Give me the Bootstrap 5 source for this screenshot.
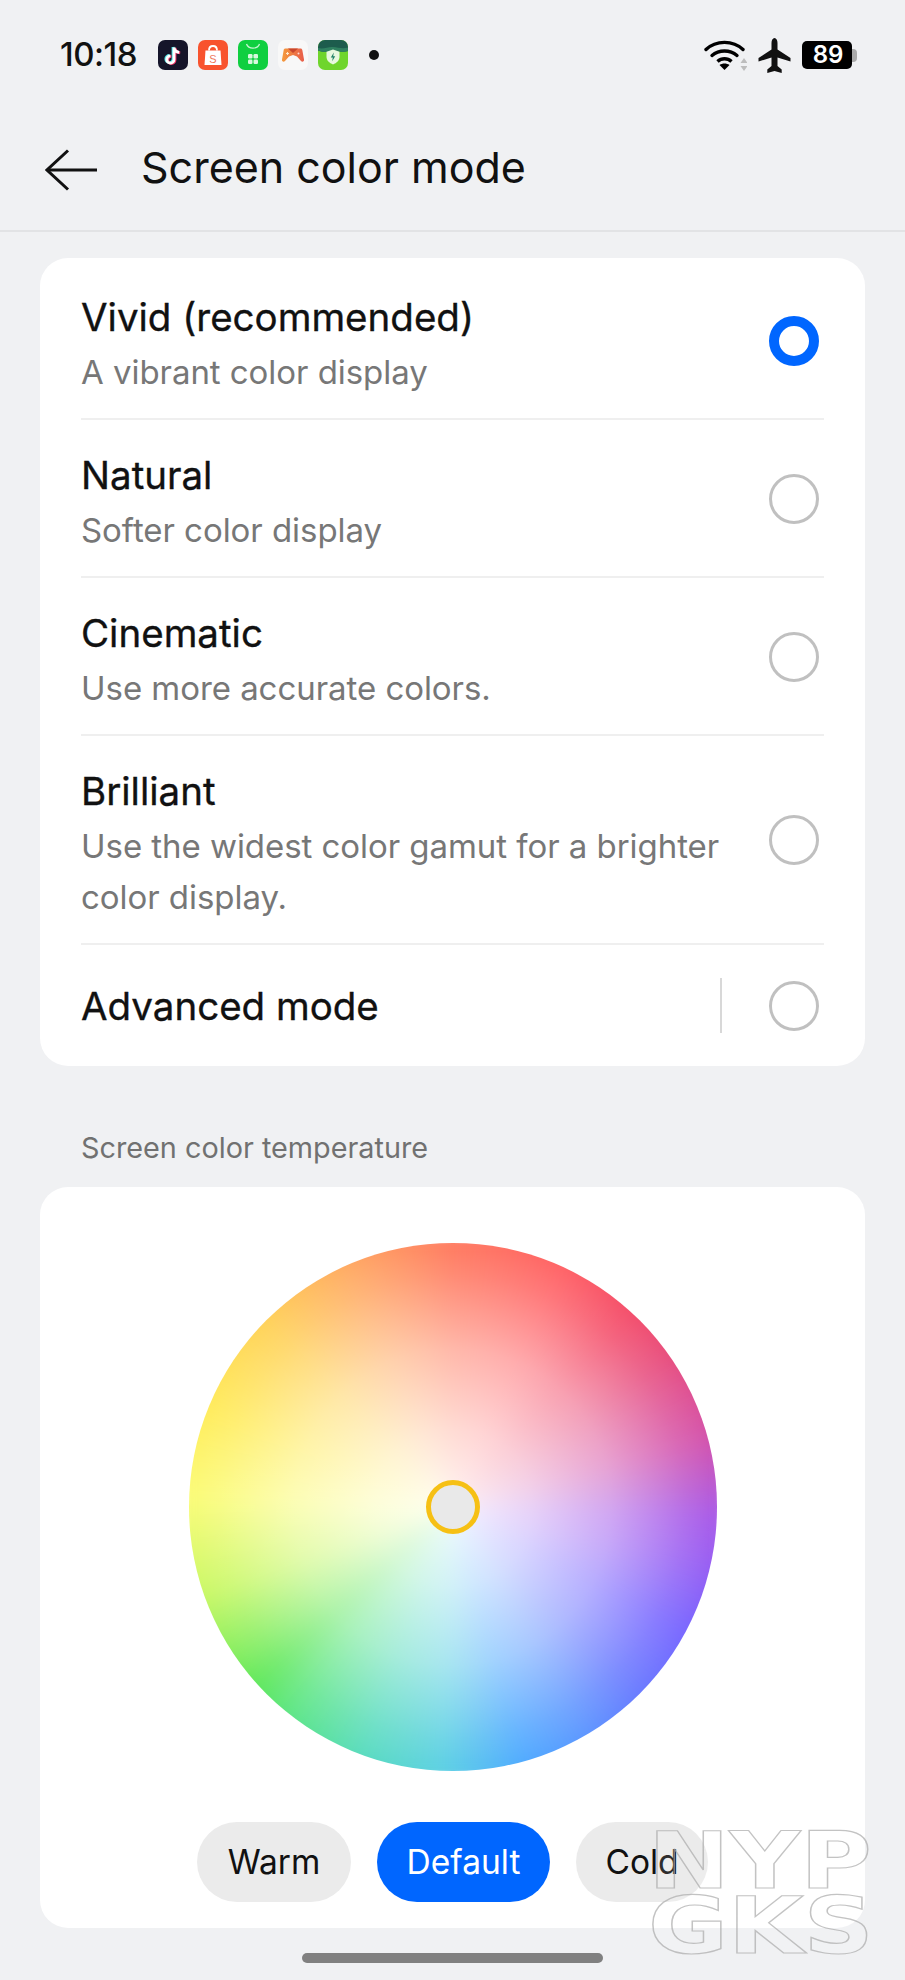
<!DOCTYPE html>
<html lang="en">
<head>
  <meta charset="UTF-8" />
  <meta name="viewport" content="width=device-width, initial-scale=1.0" />
  <title>Screen color mode</title>
  <link href="https://cdn.jsdelivr.net/npm/bootstrap@5.3.3/dist/css/bootstrap.min.css" rel="stylesheet" />
  <style>
    body { background: #f0f1f3; font-family: Inter, "Liberation Sans", sans-serif; color: #111; height: 1980px; overflow: hidden; position: relative; }
    .status-bar { height: 110px; padding: 0 48px 0 60px; }
    .status-time { font-size: 33px; font-weight: 500; width: 98px; letter-spacing: -.5px; white-space: nowrap; }
    .app-icons { gap: 10px; }
    .app-icons svg { width: 30px; height: 30px; display: block; }
    .notif-dot { width: 10px; height: 10px; background: #111; border-radius: 50%; margin-left: 21px; }
    .sys-icons { gap: 11px; }
    .batt { width: 50px; height: 28px; background: #000; border-radius: 5px; color: #fff; font-size: 24px; font-weight: 600; line-height: 28px; text-align: center; position: relative; padding-left: 2px; }
    .batt-nub { width: 5px; height: 13px; background: #aaa; border-radius: 0 4px 4px 0; }
    .page-head { height: 122px; padding: 10px 0 0 45px; border-bottom: 2px solid #e2e3e5; }
    .page-head svg { width: 52px; height: 42px; margin-right: 44px; margin-top: -10px; }
    .page-title { font-size: 43px; font-weight: 400; margin: 0; line-height: 1; margin-top: -15px; }
    .panel { margin: 0 40px; border: 0; border-radius: 28px; background: #fff; }
    .panel-modes { margin-top: 26px; padding: 0 41px; }
    .mode-row { padding: 33px 0 20px; border-bottom: 2px solid #efefef; }
    .mode-row.first-row { padding-top: 37px; }
    .mode-row.last-row { padding: 0; border: 0; height: 121px; }
    .mode-title { font-size: 38.500px; line-height: 44px; font-weight: 400; margin-bottom: 8px; -webkit-text-stroke: .35px #111; }
    .last-row .mode-title { margin-bottom: 0; }
    .mode-sub { font-size: 33px; line-height: 51px; color: #777; font-weight: 400; max-width: 660px; letter-spacing: -.05px; }
    .radio-dot { width: 50px; height: 50px; border-radius: 50%; border: 3px solid #c0c0c0; margin: 0 5px 12px 0; flex-shrink: 0; }
    .radio-dot.on { border: 10px solid #0066ff; }
    .last-row .radio-dot { margin-bottom: 0; }
    .v-line { width: 2px; height: 55px; background: #d8d8d8; margin-right: 47px; }
    .section-label { padding-left: 81px; margin: 62px 0 19px; font-size: 28.800px; line-height: 40px; color: #717171; }
    .panel-wheel { padding: 56px 0 26px; }
    .wheel { width: 528px; height: 528px; border-radius: 50%; position: relative; overflow: hidden; }
    .wheel::before { content: ""; position: absolute; inset: -14px; filter: blur(9px);
      background: conic-gradient(#ff7a60 0deg, #ff6468 25deg, #f4506c 42deg, #e8507f 55deg, #d455ad 75deg, #a85ae8 92deg, #9a5ff2 102deg, #7a68ff 118deg, #6b7cff 135deg, #5f98ff 150deg, #52acff 165deg, #5cd0e4 182deg, #5cdcc0 200deg, #60e688 218deg, #62e85e 228deg, #c8f868 250deg, #fbfc78 272deg, #ffec5e 292deg, #ffd25c 315deg, #ffa866 338deg, #ff7a60 360deg); }
    .wheel::after { content: ""; position: absolute; inset: 0;
      background: radial-gradient(circle closest-side, rgba(255,255,255,.92) 0%, rgba(255,255,255,.72) 30%, rgba(255,255,255,.46) 60%, rgba(255,255,255,.12) 88%, rgba(255,255,255,0) 100%); }
    .wheel-knob { position: absolute; z-index: 1; left: 237px; top: 237px; width: 54px; height: 54px; border-radius: 50%; border: 5px solid #f6c014; background: #e9e9e9; }
    .temp-btns { gap: 26px; margin-top: 51px; }
    .temp-btn { height: 80px; font-size: 33.500px; line-height: 80px; padding: 0; border: 0; background: #ebebeb; color: #111; width: 154px; }
    .temp-btn.is-on { background: #0066ff; color: #fff; width: 173px; }
    .temp-btn.is-cold { width: 132px; }
    .home-bar { width: 301px; height: 10px; background: #808080; margin: 25px auto 0; }
    .watermark { position: absolute; left: 648px; top: 1829px; font-family: "DejaVu Sans", sans-serif; font-weight: 700; font-size: 78px; line-height: 65px; color: rgba(255,255,255,.12); -webkit-text-stroke: 1.2px rgba(170,170,170,.7); white-space: nowrap; transform: scaleX(1.25); transform-origin: left top; }
  </style>
</head>
<body>

  <div class="status-bar d-flex align-items-center">
    <div class="status-time">10:18</div>
    <div class="app-icons d-flex align-items-center">
      <!-- tiktok -->
      <svg viewBox="0 0 30 30"><rect width="30" height="30" rx="7" fill="#15152a"/><g fill="none" stroke-width="2.8"><path d="M15 7v12a3.6 3.6 0 1 1-3.6-3.6M15 7c.3 2.7 2.2 4.5 5.2 4.8" stroke="#4fe3e6"/><path d="M17 8v12a3.6 3.6 0 1 1-3.6-3.6M17 8c.3 2.7 2.2 4.5 5.2 4.8" stroke="#f5356a"/><path d="M16 7.5v12a3.6 3.6 0 1 1-3.6-3.6M16 7.5c.3 2.7 2.2 4.5 5.2 4.8" stroke="#fff"/></g></svg>
      <!-- shopee -->
      <svg viewBox="0 0 30 30"><rect width="30" height="30" rx="7" fill="#f8532e"/><path d="M7.500 10.500h15l1 14.500h-17z" fill="#fff"/><path d="M11 10.500c0-6 8-6 8 0" fill="none" stroke="#fff" stroke-width="1.800"/><text x="15" y="22.500" text-anchor="middle" font-family="Liberation Sans" font-size="11" fill="#f0795c">S</text></svg>
      <!-- store -->
      <svg viewBox="0 0 30 30"><rect width="30" height="30" rx="7" fill="#10cf40"/><path d="M8.500 4c2 5.500 11 5.500 13 0" fill="none" stroke="#c8f5d2" stroke-width="1.300"/><g fill="#d8f8df"><rect x="10" y="14" width="4.500" height="4.500" rx="1.200"/><rect x="15.500" y="14" width="4.500" height="4.500" rx="1.200"/><rect x="10" y="19.500" width="4.500" height="4.500" rx="1.200"/><rect x="15.500" y="19.500" width="4.500" height="4.500" rx="1.200"/></g></svg>
      <!-- games -->
      <svg viewBox="0 0 30 30"><defs><linearGradient id="pad" x1="0" x2="1"><stop offset="0" stop-color="#f59a3c"/><stop offset="1" stop-color="#e85c4a"/></linearGradient></defs><rect width="30" height="30" rx="7" fill="#f8f8f8"/><path d="M7.500 8.500h15c1 0 1.600.6 1.800 1.500l1.700 9.500c.4 2-1.700 3-3 1.500L19 16.500l-4-1.500-4 1.500-4 4.500c-1.300 1.500-3.400.5-3-1.500L5.700 10c.2-1 .8-1.500 1.800-1.500z" fill="url(#pad)"/><path d="M10 8.500l5 4.500 5-4.500z" fill="#c9472e"/><path d="M8 13.500h3M9.500 12v3" stroke="#ffe9c9" stroke-width="1.100"/><circle cx="20.500" cy="13.500" r="1" fill="#ffd9cf"/></svg>
      <!-- security -->
      <svg viewBox="0 0 30 30"><defs><clipPath id="secclip"><rect width="30" height="30" rx="7"/></clipPath></defs><g clip-path="url(#secclip)"><rect width="30" height="30" fill="#6fd52c"/><path d="M0 0h30v11c-5 2-9-.5-15 0S5 12.500 0 10.500z" fill="#1d5c4d"/><path d="M0 8c6 1.500 10-1.500 15-1s10 2 15 .5v3.500c-5 2-9-.5-15 0S5 12.500 0 10.500z" fill="#2f8060"/></g><path d="M15 9.500l6.500 2.300v5c0 3.800-2.800 6.200-6.500 7.700-3.700-1.500-6.500-3.900-6.500-7.700v-5z" fill="#e8f8e0"/><path d="M15.800 12.500l-3 5h2l-.6 3.800 3-5h-2z" fill="#1f7f66"/></svg>
    </div>
    <div class="notif-dot"></div>
    <div class="sys-icons d-flex align-items-center ms-auto">
      <svg width="43" height="32" viewBox="0 0 43 32" class="d-block">
        <g fill="none" stroke="#000" stroke-width="3.400" stroke-linecap="round"><path d="M2 10.500c10-9.500 27-9.500 37 0"/><path d="M8 16.500c7-6 18-6 25 0"/></g>
        <path d="M13.500 22.500c4-3.700 10-3.700 14 0" fill="none" stroke="#000" stroke-width="3.400"/>
        <path d="M20.500 31l-5-5c3-2 7-2 10 0z" fill="#000"/>
        <path d="M40 19l3.500 5h-7zM40 32l3.500-5h-7z" fill="#bdbdbd"/>
      </svg>
      <svg width="33" height="35" viewBox="0 0 33 35" class="d-block">
        <path d="M16.500 0c1.800 0 3 2.200 3 5v6.500l13 8.500v3.500l-13-4v8.500l4.200 3.400V35l-7.200-2-7.200 2v-3.600l4.200-3.400V19.500l-13 4V20l13-8.500V5c0-2.800 1.200-5 3-5z" fill="#111"/>
      </svg>
      <div class="d-flex align-items-center">
        <div class="batt">89</div>
        <div class="batt-nub"></div>
      </div>
    </div>
  </div>

  <div class="page-head d-flex align-items-center">
    <svg viewBox="0 0 52 42" fill="none" stroke="#111" stroke-width="3"><path d="M52 21H2"/><path d="M23 1.500L2 21l21 19.500"/></svg>
    <h1 class="page-title">Screen color mode</h1>
  </div>

  <div class="card panel panel-modes">
    <div class="mode-row first-row d-flex align-items-center justify-content-between">
      <div>
        <div class="mode-title">Vivid (recommended)</div>
        <div class="mode-sub">A vibrant color display</div>
      </div>
      <div class="radio-dot on"></div>
    </div>
    <div class="mode-row d-flex align-items-center justify-content-between">
      <div>
        <div class="mode-title">Natural</div>
        <div class="mode-sub">Softer color display</div>
      </div>
      <div class="radio-dot"></div>
    </div>
    <div class="mode-row d-flex align-items-center justify-content-between">
      <div>
        <div class="mode-title">Cinematic</div>
        <div class="mode-sub">Use more accurate colors.</div>
      </div>
      <div class="radio-dot"></div>
    </div>
    <div class="mode-row d-flex align-items-center justify-content-between">
      <div>
        <div class="mode-title">Brilliant</div>
        <div class="mode-sub">Use the widest color gamut for a brighter color display.</div>
      </div>
      <div class="radio-dot"></div>
    </div>
    <div class="mode-row last-row d-flex align-items-center">
      <div class="mode-title flex-grow-1">Advanced mode</div>
      <div class="v-line"></div>
      <div class="radio-dot"></div>
    </div>
  </div>

  <div class="section-label">Screen color temperature</div>

  <div class="card panel panel-wheel align-items-center">
    <div class="wheel">
      <div class="wheel-knob"></div>
    </div>
    <div class="temp-btns d-flex">
      <button class="btn rounded-pill temp-btn">Warm</button>
      <button class="btn rounded-pill temp-btn is-on">Default</button>
      <button class="btn rounded-pill temp-btn is-cold">Cold</button>
    </div>
  </div>

  <div class="home-bar rounded-pill"></div>

  <div class="watermark">NYP<br>GKS</div>

  <script src="https://cdn.jsdelivr.net/npm/bootstrap@5.3.3/dist/js/bootstrap.bundle.min.js"></script>
</body>
</html>
